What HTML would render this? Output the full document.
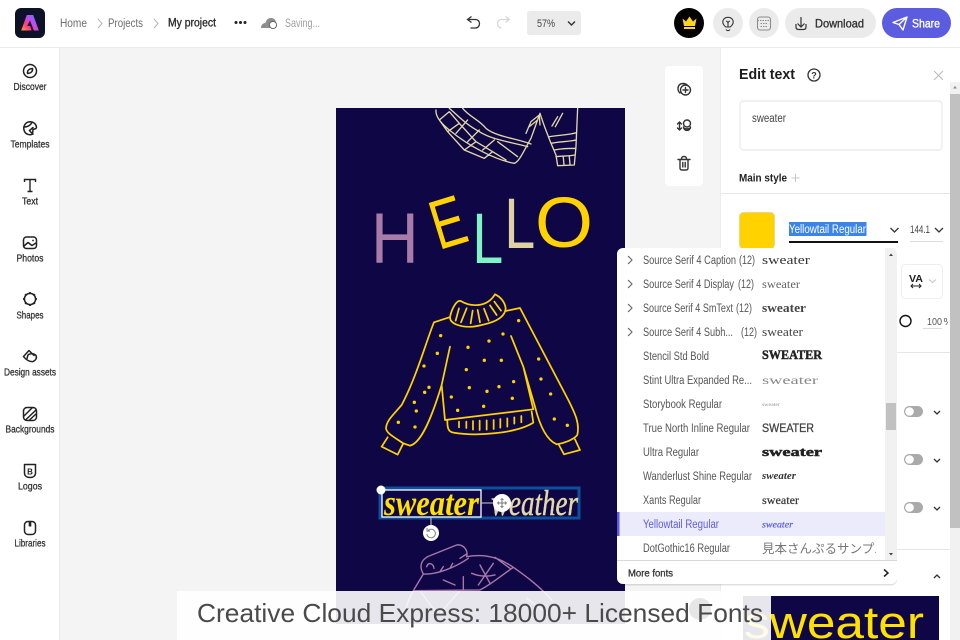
<!DOCTYPE html>
<html lang="en"><head><meta charset="utf-8"><title>Creative Cloud Express</title>
<style>
html,body{margin:0;padding:0;width:960px;height:640px;overflow:hidden;background:#f4f4f4}
svg{display:block;position:absolute;left:0;top:0}
text{font-family:"Liberation Sans","Noto Sans CJK JP",sans-serif}
.n{font-size:11.5px;fill:#555}
.k{font-size:10.5px;fill:#333;stroke:#333;stroke-width:.3;text-anchor:middle}
.i{fill:none;stroke:#222;stroke-width:1.5;stroke-linecap:round;stroke-linejoin:round}
.c{fill:none;stroke:#333;stroke-width:1.4;stroke-linecap:round;stroke-linejoin:round}
.sw{fill:none;stroke:#ffd200;stroke-width:5.2;stroke-linecap:round;stroke-linejoin:round}
.cr{fill:none;stroke:#e3d8a6;stroke-width:4;stroke-linecap:round;stroke-linejoin:round}
.pu{fill:none;stroke:#a877a9;stroke-width:4.2;stroke-linecap:round;stroke-linejoin:round}
</style></head><body>
<svg width="960" height="640" viewBox="0 0 960 640" xmlns="http://www.w3.org/2000/svg">
<defs>
<linearGradient id="lg" x1="0" y1="1" x2="1" y2="0.2"><stop offset="0" stop-color="#ffa02a"/><stop offset=".35" stop-color="#ff3d7f"/><stop offset=".65" stop-color="#c04af5"/><stop offset="1" stop-color="#3f8bf7"/></linearGradient>
<clipPath id="art"><rect x="336" y="108" width="289" height="516"/></clipPath>
<clipPath id="dot"><rect x="762" y="538" width="114" height="22"/></clipPath>
<clipPath id="pct"><rect x="920" y="310" width="28" height="20"/></clipPath>
</defs>
<rect width="960" height="640" fill="#f4f4f4"/>

<!-- artboard -->
<rect x="336" y="108" width="289" height="516" fill="#0f0745"/>
<g clip-path="url(#art)">
  <g transform="translate(336,100) scale(.3333)">
    <path class="cr" d="M300 30C298 50 315 70 340 90C400 140 480 180 535 190C550 185 565 150 585 115L612 40M340 25C370 50 385 70 430 95C470 120 520 125 575 140M380 25C400 50 430 60 450 85C480 110 540 115 585 132M612 40C625 80 640 120 660 165L665 197L715 195L720 140L725 25M640 110C670 105 700 105 722 98M645 130C670 125 700 125 720 120M655 150C680 145 700 145 720 145M660 170C680 168 700 168 718 165M682 172L684 195M700 170L702 193M648 78L665 50M658 80L680 40M570 100L585 65L610 45L612 75M580 80L605 60M310 60L340 35L370 70L335 95ZM370 70L420 125L385 150L335 95M420 125L470 155L445 175L385 150M470 155L510 180M485 125L545 170M360 100L395 60M395 125L430 90M440 150L475 120"/>
  </g>
  <g fill="#ffd200">
    <text transform="translate(371,263) scale(.93,1)" x="0" y="0" font-size="71" fill="#a97ba8">H</text>
    <text transform="translate(443,249) rotate(-17) scale(.72,1)" x="-6" y="0" font-size="70">E</text>
    <text transform="translate(477,263) scale(.78,1)" x="-6" y="0" font-size="71" fill="#7ff5c5">L</text>
    <text transform="translate(509,248) scale(.78,1)" x="-6" y="0" font-size="71" fill="#ddd2a0">L</text>
    <text transform="translate(535,247) scale(1.05,1)" x="0" y="0" font-size="71">O</text>
  </g>
  <g transform="translate(360,280) scale(.3333)">
    <path class="sw" d="M270 112C275 85 290 60 302 63C330 80 380 85 405 43C420 50 435 65 437 85C435 115 400 130 340 140C300 143 270 130 270 112Z"/>
    <path class="sw" d="M287 122L297 85M303 127L320 85M332 130L338 92M360 127L353 90M386 122L372 86M410 105L390 76M423 92L403 65"/>
    <path class="sw" d="M268 112L222 127C200 180 170 290 125 375C100 405 80 420 78 445C80 460 100 470 130 490L150 497C180 490 210 430 245 315L270 200"/>
    <path class="sw" d="M437 93L480 84L625 360C645 400 660 430 652 465C640 480 610 490 590 493C560 480 540 440 525 380L490 260L453 168M490 260L520 388L255 420L245 315"/>
    <path class="sw" d="M262 422C262 445 265 455 280 458C350 470 470 460 520 428L515 395"/>
    <path class="sw" d="M83 472L65 500L113 524L130 490M597 495L612 523L660 510L645 478"/>
    <path class="sw" d="M297 425V442M319 425V444M339 423V449M359 422V450M380 421V449M401 420V447M421 417V443M442 415V440M463 412V431M484 408V427"/>
    <g fill="#ffd200"><circle cx="476" cy="122" r="5"/><circle cx="242" cy="167" r="5"/><circle cx="429" cy="162" r="5"/><circle cx="387" cy="183" r="5"/><circle cx="324" cy="202" r="5"/><circle cx="232" cy="220" r="5"/><circle cx="373" cy="241" r="5"/><circle cx="424" cy="241" r="5"/><circle cx="536" cy="237" r="5"/><circle cx="192" cy="258" r="5"/><circle cx="319" cy="269" r="5"/><circle cx="543" cy="297" r="5"/><circle cx="461" cy="305" r="5"/><circle cx="417" cy="320" r="5"/><circle cx="328" cy="323" r="5"/><circle cx="207" cy="322" r="5"/><circle cx="194" cy="337" r="5"/><circle cx="381" cy="334" r="5"/><circle cx="572" cy="342" r="5"/><circle cx="274" cy="351" r="5"/><circle cx="457" cy="355" r="5"/><circle cx="163" cy="367" r="5"/><circle cx="371" cy="379" r="5"/><circle cx="169" cy="393" r="5"/><circle cx="293" cy="391" r="5"/><circle cx="583" cy="417" r="5"/><circle cx="115" cy="427" r="5"/><circle cx="622" cy="436" r="5"/><circle cx="165" cy="441" r="5"/></g>
  </g>
  <!-- selected text -->
  <rect x="380" y="488" width="199" height="30" fill="none" stroke="#0d4f9c" stroke-width="3"/>
  <text x="384" y="515" font-size="36" font-style="italic" font-weight="bold" fill="#ffe100" textLength="95" lengthAdjust="spacingAndGlyphs" style="font-family:'Liberation Serif',serif">sweater</text>
  <text x="491" y="515" font-size="36" font-style="italic" fill="#e3d8a6" stroke="#e3d8a6" stroke-width=".5" textLength="87" lengthAdjust="spacingAndGlyphs" style="font-family:'Liberation Serif',serif">weather</text>
  <rect x="382" y="490" width="99" height="27" fill="none" stroke="#fff" stroke-width="1.3"/>
  <path d="M481 503H494M431 517V526" stroke="#cfcfd8" stroke-width="1"/>
  <circle cx="381" cy="490" r="4.5" fill="#fff"/>
  <circle cx="502" cy="503" r="9" fill="#fff"/>
  <path d="M502 499V507M498 503H506" stroke="#777" stroke-width="1"/>
  <path d="M500.500 500L502 498.500L503.500 500M500.500 506L502 507.500L503.500 506M499 501.500L497.500 503L499 504.500M505 501.500L506.500 503L505 504.500" fill="none" stroke="#777" stroke-width=".8"/>
  <circle cx="431" cy="533" r="8" fill="#fff"/>
  <path d="M428 530.500A4.300 4.300 0 1 1 426.800 534M427 528V531H430" fill="none" stroke="#777" stroke-width=".9"/>
  <!-- bottom sweater -->
  <g transform="translate(360,470) scale(.3333)">
    <path class="pu" d="M190 312C175 285 185 265 215 255L290 225C310 222 325 240 320 260C350 255 400 250 460 292C420 320 390 345 360 360L160 362ZM190 312C230 315 290 290 325 265M200 290C205 275 220 280 222 295M300 265L320 252M240 305L250 290M270 295L278 280M335 310C360 320 385 320 405 315M360 285L390 340M400 280L355 345M405 262L450 295M460 292C500 320 540 350 575 390M160 362C150 380 140 400 130 440M250 330L285 345M310 320V360M180 362L230 430M300 362L240 430M500 385L560 430"/>
  </g>
</g>

<!-- top bar -->
<rect width="960" height="47" fill="#fff"/>
<rect y="47" width="960" height="1" fill="#ececec"/>
<rect x="15" y="8" width="30" height="30" rx="6" fill="#0d1226"/>
<path d="M26.800 15H33.200L38.800 30.500H33.800L30 20.500L27.200 26H30.200L31.500 30.500H21.200Z" fill="url(#lg)"/>
<text x="60" y="27" font-size="11.500" fill="#6e6e6e" textLength="27" lengthAdjust="spacingAndGlyphs">Home</text>
<path d="M98 19L102 23.500L98 28M154 19L158 23.500L154 28" fill="none" stroke="#b5b5b5" stroke-width="1"/>
<text x="108" y="27" font-size="11.500" fill="#6e6e6e" textLength="35" lengthAdjust="spacingAndGlyphs">Projects</text>
<text x="168" y="26.500" font-size="11.500" fill="#2c2c2c" stroke="#2c2c2c" stroke-width=".35" textLength="48" lengthAdjust="spacingAndGlyphs">My project</text>
<g fill="#222"><circle cx="236" cy="22.500" r="1.500"/><circle cx="240.500" cy="22.500" r="1.500"/><circle cx="245" cy="22.500" r="1.500"/></g>
<path d="M261 28C261 24 264 23 265.500 23C266 20 268 18 271 18C274 18 276 20 276 23L273 28Z" fill="#8d8d8d"/>
<circle cx="273" cy="25" r="3.600" fill="#fff" stroke="#666" stroke-width="1"/>
<text x="285" y="27" font-size="11.500" fill="#a0a0a0" textLength="35" lengthAdjust="spacingAndGlyphs">Saving...</text>

<path d="M468 19.500H475.500C478 19.500 479.500 21.500 479.500 23.500C479.500 26 478 28 475.500 28H470.500M471.500 16.500L467.500 19.500L471.500 22.500" fill="none" stroke="#333" stroke-width="1.300"/>
<path d="M509 19.500H501.500C499 19.500 497.500 21.500 497.500 23.500C497.500 26 499 28 501.500 28M505.500 16.500L509.500 19.500L505.500 22.500" fill="none" stroke="#d8d8d8" stroke-width="1.300"/>
<rect x="527" y="11" width="54" height="24" rx="3" fill="#ebebeb"/>
<text x="537" y="27" font-size="11" fill="#444" textLength="18" lengthAdjust="spacingAndGlyphs">57%</text>
<path d="M568 21.500L571.500 25L575 21.500" fill="none" stroke="#333" stroke-width="1.400"/>

<circle cx="689" cy="23" r="15" fill="#000"/>
<path d="M682.500 18.500L686 21.500L689.500 16.500L693 21.500L696.500 18.500L695 26H684Z" fill="#ffd51e"/><rect x="684" y="27" width="11" height="2" fill="#ffd51e"/>
<circle cx="728" cy="23" r="15" fill="#ebebeb"/>
<path d="M725.800 27C724 25.500 722.800 24 722.800 22C722.800 19.200 725 17.300 728 17.300C731 17.300 733.200 19.200 733.200 22C733.200 24 732 25.500 730.200 27ZM726 29.500C727 31 729 31 730 29.500M728 26.500V22.500L726.300 20.800M728 22.500L729.700 20.800" fill="none" stroke="#333" stroke-width="1.100"/>
<circle cx="764" cy="23" r="15" fill="#ebebeb"/>
<rect x="757.500" y="17" width="13" height="13" rx="2.500" fill="none" stroke="#8d8d8d" stroke-width="1.100"/>
<path d="M757.500 20.500H770.500M760.500 23.500H767.500M760.500 26.500H767.500" stroke="#8d8d8d" stroke-width="1.100" stroke-dasharray="1.500 1"/>
<rect x="785" y="8" width="91" height="30" rx="15" fill="#ebebeb"/>
<path d="M801 17V26.500M797.500 23.500L801 27L804.500 23.500M796 24V27C796 28.500 797 29.500 798.500 29.500H803.500C805 29.500 806 28.500 806 27V24" fill="none" stroke="#333" stroke-width="1.200"/>
<text x="815" y="27.500" font-size="12" fill="#333" stroke="#333" stroke-width=".35" textLength="49" lengthAdjust="spacingAndGlyphs">Download</text>
<rect x="882" y="8" width="69" height="30" rx="15" fill="#5c5ce0"/>
<path d="M893 22.500L907 17L903 30L899 24.500ZM899 24.500L907 17" fill="none" stroke="#fff" stroke-width="1.400" stroke-linejoin="round"/>
<text x="912" y="27.500" font-size="12" fill="#fff" stroke="#fff" stroke-width=".35" textLength="28" lengthAdjust="spacingAndGlyphs">Share</text>

<!-- left sidebar -->
<rect y="48" width="59" height="592" fill="#fff"/>
<rect x="59" y="48" width="1" height="592" fill="#ececec"/>
<circle class="i" cx="30" cy="71" r="6.500"/><path class="i" d="M27.500 73.500C27 70.500 29 68.800 32.500 68.500C33 71.500 31 73.200 27.500 73.500Z"/>
<text class="k" x="30" y="90" textLength="33" lengthAdjust="spacingAndGlyphs">Discover</text>
<path class="i" d="M33 134C30 135.500 26 134.500 24.500 131.500C22.500 127 25 122 30 121.800C34 121.800 36.500 124.500 36.500 127.500"/><path class="i" d="M24 127C27 127 30 126 32 122.500M36 128.500L33 129.500L32.500 134L29.500 130.500L33 127.500"/>
<text class="k" x="30" y="147.500" textLength="39" lengthAdjust="spacingAndGlyphs">Templates</text>
<path d="M24.500 182V179.500H35.500V182M30 179.500V191.500M27.500 191.500H32.500" fill="none" stroke="#222" stroke-width="1.400"/>
<text class="k" x="30" y="204.500" textLength="16" lengthAdjust="spacingAndGlyphs">Text</text>
<rect class="i" x="23.500" y="237" width="13" height="11.500" rx="3"/><path class="i" d="M24 246L28 242.500L32 245.500L36 243"/><circle cx="33" cy="240.500" r=".9" fill="#222"/>
<text class="k" x="30" y="261.500" textLength="27" lengthAdjust="spacingAndGlyphs">Photos</text>
<circle class="i" cx="30" cy="299" r="5.600"/><g fill="#222"><circle cx="30" cy="293" r="1.100"/><circle cx="30" cy="305" r="1.100"/><circle cx="24" cy="299" r="1.100"/><circle cx="36" cy="299" r="1.100"/><circle cx="25.800" cy="294.800" r="1.100"/><circle cx="34.200" cy="294.800" r="1.100"/><circle cx="25.800" cy="303.200" r="1.100"/><circle cx="34.200" cy="303.200" r="1.100"/></g>
<text class="k" x="30" y="318.500" textLength="27" lengthAdjust="spacingAndGlyphs">Shapes</text>
<path class="i" d="M23.500 356.500L29 350.500L34 355.500"/><path class="i" d="M23.500 356.500C26 360 30 362 33 361.500C36 360.500 37 357.500 36 355.500C34.500 353.500 30 353 28 355L27 358.500"/>
<text class="k" x="30" y="375.500" textLength="52" lengthAdjust="spacingAndGlyphs">Design assets</text>
<rect class="i" x="23.500" y="407.500" width="13" height="13" rx="3.500"/><path class="i" d="M24 416L32 408M25.500 420L36 410M29.500 420L36 414"/>
<text class="k" x="30" y="432.500" textLength="49" lengthAdjust="spacingAndGlyphs">Backgrounds</text>
<path class="i" d="M24.500 464.500H35.500V473C35.500 476 33 477.500 30 477.500C27 477.500 24.500 476 24.500 473Z"/><text x="30" y="474.500" font-size="8" font-weight="bold" text-anchor="middle" fill="#222">B</text>
<text class="k" x="30" y="489.500" textLength="24" lengthAdjust="spacingAndGlyphs">Logos</text>
<rect class="i" x="24.500" y="521.500" width="11" height="13" rx="3.500"/><rect x="28.700" y="521" width="2.600" height="5.500" fill="#222"/>
<text class="k" x="30" y="546.500" textLength="31" lengthAdjust="spacingAndGlyphs">Libraries</text>

<!-- floating toolbar -->
<rect x="665" y="66" width="38" height="120" rx="4" fill="#fff"/>
<path class="c" d="M680 93C678.500 92 678 90.500 678 88.500C678 85.500 680 83.500 683 83.500C685 83.500 686.500 84 687.500 85.500"/><circle class="c" cx="685.500" cy="90" r="5"/><path class="c" d="M685.500 87.500V92.500M683 90H688" stroke-width="1.100"/>
<circle class="c" cx="687" cy="123.500" r="3.500"/><path class="c" d="M683.500 127C683.500 129.500 690.500 129.500 690.500 127C690.500 131.500 683.500 131.500 683.500 127Z"/><path class="c" d="M679.500 122V130M677.500 124L679.500 122L681.500 124M677.500 128L679.500 130L681.500 128"/>
<path class="c" d="M678 159.500H690M680 159.500V168C680 169.200 680.800 170 682 170H686C687.200 170 688 169.200 688 168V159.500M681.500 159.500C681.500 157 682.500 156.500 684 156.500C685.500 156.500 686.500 157 686.500 159.500M682.800 162.500V167M685.200 162.500V167"/>

<!-- right panel -->
<rect x="721" y="48" width="239" height="592" fill="#fff"/>
<rect x="720" y="48" width="1" height="592" fill="#ececec"/>
<rect x="950" y="82" width="10" height="558" fill="#f1f1f1"/>
<rect x="950" y="94" width="10" height="434" fill="#c1c1c1"/>
<path d="M953 88.500L955 86L957 88.500Z" fill="#8a8a8a"/>
<text x="739" y="79" font-size="14.500" font-weight="bold" fill="#1c1c1c" textLength="56" lengthAdjust="spacingAndGlyphs">Edit text</text>
<circle cx="814" cy="75" r="6" fill="none" stroke="#333" stroke-width="1.300"/>
<text x="814" y="78.500" font-size="9" font-weight="bold" text-anchor="middle" fill="#333">?</text>
<path d="M934 71L943 80M943 71L934 80" stroke="#bcbcbc" stroke-width="1.100"/>
<rect x="740" y="101" width="202" height="49" rx="3.500" fill="#fff" stroke="#ececec" stroke-width="1.400"/>
<text x="752" y="122" font-size="11.500" fill="#444" textLength="34" lengthAdjust="spacingAndGlyphs">sweater</text>
<text x="739" y="181.500" font-size="11" font-weight="bold" fill="#222" textLength="48" lengthAdjust="spacingAndGlyphs">Main style</text>
<path d="M795.500 174V182M791.500 178H799.500" stroke="#c5c5c5" stroke-width="1"/>
<rect x="721" y="193" width="229" height="1" fill="#e6e6e6"/>
<rect x="739.500" y="212.500" width="35" height="36" rx="4" fill="#ffd200" stroke="#e7d590"/>
<rect x="789" y="222" width="77.500" height="14" fill="#3b85e8"/>
<text x="789" y="233" font-size="11.500" fill="#fff" textLength="77" lengthAdjust="spacingAndGlyphs">Yellowtail Regular</text>
<path d="M890.500 228L894.500 232L898.500 228M935 228L939 232L943 228" fill="none" stroke="#333" stroke-width="1.300"/>
<rect x="789" y="241" width="109" height="2" fill="#111"/>
<text x="910" y="233" font-size="11" fill="#444" textLength="20" lengthAdjust="spacingAndGlyphs">144.1</text>
<rect x="910" y="241" width="33" height="1" fill="#dcdcdc"/>
<rect x="901.500" y="264.500" width="41" height="34" rx="4" fill="#fff" stroke="#eee"/>
<text x="909" y="282" font-size="10" font-weight="bold" fill="#222" textLength="14" lengthAdjust="spacingAndGlyphs">VA</text>
<path d="M911 286H921M913 284L911 286L913 288M919 284L921 286L919 288" fill="none" stroke="#222" stroke-width="1"/>
<path d="M929 279.500L932.500 282.500L936 279.500" fill="none" stroke="#c5c5c5" stroke-width="1.100"/>
<circle cx="905.500" cy="321" r="5.500" fill="none" stroke="#111" stroke-width="1.400"/>
<g clip-path="url(#pct)">
<text x="927" y="325" font-size="10.500" fill="#555" textLength="15" lengthAdjust="spacingAndGlyphs">100</text>
<text x="943.500" y="325" font-size="10.500" fill="#555">%</text>
</g>
<rect x="923" y="328" width="19" height="1" fill="#dcdcdc"/>
<rect x="721" y="352" width="229" height="1" fill="#e6e6e6"/>
<g>
<rect x="904" y="406" width="19" height="11" rx="5.500" fill="#aaa"/><circle cx="909.500" cy="411.500" r="4.300" fill="#fff"/>
<rect x="904" y="454" width="19" height="11" rx="5.500" fill="#aaa"/><circle cx="909.500" cy="459.500" r="4.300" fill="#fff"/>
<rect x="904" y="502" width="19" height="11" rx="5.500" fill="#aaa"/><circle cx="909.500" cy="507.500" r="4.300" fill="#fff"/>
</g>
<path d="M934 411L937 414L940 411M934 459L937 462L940 459M934 507L937 510L940 507M934 578L937 575L940 578" fill="none" stroke="#333" stroke-width="1.300"/>
<rect x="721" y="549" width="229" height="1" fill="#e6e6e6"/>

<!-- thumbnail + banner -->
<rect x="743" y="596" width="196" height="44" fill="#0f0745"/>
<text x="744" y="638" font-size="45" fill="#ffe100" textLength="180" lengthAdjust="spacingAndGlyphs">sweater</text>
<circle cx="700" cy="609" r="11" fill="#000"/>
<rect x="177" y="591" width="594" height="49" fill="#fff" fill-opacity=".9"/>
<text x="197" y="622" font-size="26" fill="#4a4a4a" textLength="566" lengthAdjust="spacingAndGlyphs">Creative Cloud Express: 18000+ Licensed Fonts</text>

<!-- font dropdown -->
<rect x="617" y="248" width="280" height="336" rx="6" fill="#000" fill-opacity=".12" transform="translate(0,1.500)"/>
<rect x="617" y="248" width="280" height="336" rx="6" fill="#fff"/>
<path d="M885 248H891A6 6 0 0 1 897 254V560H885Z" fill="#f1f1f1"/>
<rect x="886" y="403" width="10" height="27" fill="#c1c1c1"/>
<path d="M889 256L891 253.500L893 256ZM889 553L891 555.500L893 553Z" fill="#444"/>
<path d="M628 256L632 260L628 264M628 280L632 284L628 288M628 304L632 308L628 312M628 328L632 332L628 336" fill="none" stroke="#666" stroke-width="1.100"/>

<text class="n" x="643" y="264" textLength="93" lengthAdjust="spacingAndGlyphs">Source Serif 4 Caption</text><text class="n" x="739" y="264" textLength="16" lengthAdjust="spacingAndGlyphs">(12)</text>
<text class="n" x="643" y="288" textLength="91" lengthAdjust="spacingAndGlyphs">Source Serif 4 Display</text><text class="n" x="738" y="288" textLength="16" lengthAdjust="spacingAndGlyphs">(12)</text>
<text class="n" x="643" y="312" textLength="90" lengthAdjust="spacingAndGlyphs">Source Serif 4 SmText</text><text class="n" x="736" y="312" textLength="16" lengthAdjust="spacingAndGlyphs">(12)</text>
<text class="n" x="643" y="336" textLength="90" lengthAdjust="spacingAndGlyphs">Source Serif 4 Subh...</text><text class="n" x="741" y="336" textLength="16" lengthAdjust="spacingAndGlyphs">(12)</text>
<text class="n" x="643" y="360" textLength="66" lengthAdjust="spacingAndGlyphs">Stencil Std Bold</text>
<text class="n" x="643" y="384" textLength="109" lengthAdjust="spacingAndGlyphs">Stint Ultra Expanded Re...</text>
<text class="n" x="643" y="408" textLength="79" lengthAdjust="spacingAndGlyphs">Storybook Regular</text>
<text class="n" x="643" y="432" textLength="107" lengthAdjust="spacingAndGlyphs">True North Inline Regular</text>
<text class="n" x="643" y="456" textLength="56" lengthAdjust="spacingAndGlyphs">Ultra Regular</text>
<text class="n" x="643" y="480" textLength="109" lengthAdjust="spacingAndGlyphs">Wanderlust Shine Regular</text>
<text class="n" x="643" y="504" textLength="58" lengthAdjust="spacingAndGlyphs">Xants Regular</text>
<rect x="617" y="512" width="268" height="24" fill="#ecebfb"/><rect x="617" y="512" width="2.500" height="24" fill="#5c5ce0"/>
<text class="n" x="643" y="528" textLength="76" lengthAdjust="spacingAndGlyphs" style="fill:#5c5ce0">Yellowtail Regular</text>
<text class="n" x="643" y="552" textLength="87" lengthAdjust="spacingAndGlyphs">DotGothic16 Regular</text>

<g>
<text x="762" y="264" font-size="13" fill="#333" textLength="48" lengthAdjust="spacingAndGlyphs" style="font-family:'Liberation Serif',serif">sweater</text>
<text x="762" y="288" font-size="12" fill="#666" textLength="38" lengthAdjust="spacingAndGlyphs" style="font-family:'Liberation Serif',serif">sweater</text>
<text x="762" y="312" font-size="12.500" font-weight="bold" fill="#444" textLength="44" lengthAdjust="spacingAndGlyphs" style="font-family:'Liberation Serif',serif">sweater</text>
<text x="762" y="336" font-size="12.500" fill="#444" textLength="41" lengthAdjust="spacingAndGlyphs" style="font-family:'Liberation Serif',serif">sweater</text>
<text x="762" y="359" font-size="12.500" font-weight="bold" fill="#222" stroke="#222" stroke-width=".4" textLength="60" lengthAdjust="spacingAndGlyphs" style="font-family:'Liberation Serif',serif">SWEATER</text>
<text x="762" y="384" font-size="12" fill="#888" textLength="56" lengthAdjust="spacingAndGlyphs" style="font-family:'Liberation Serif',serif">sweater</text>
<text x="762" y="406" font-size="5" fill="#999" textLength="18" lengthAdjust="spacingAndGlyphs" style="font-family:'Liberation Serif',serif">sweater</text>
<text x="762" y="432" font-size="12" fill="#444" stroke="#444" stroke-width=".3" textLength="52" lengthAdjust="spacingAndGlyphs">SWEATER</text>
<text x="762" y="456" font-size="13" font-weight="bold" fill="#222" stroke="#222" stroke-width=".5" textLength="60" lengthAdjust="spacingAndGlyphs" style="font-family:'Liberation Serif',serif">sweater</text>
<text x="762" y="479" font-size="10.500" font-style="italic" font-weight="bold" fill="#333" textLength="34" lengthAdjust="spacingAndGlyphs" style="font-family:'Liberation Serif',serif">sweater</text>
<text x="762" y="504" font-size="12" fill="#333" stroke="#333" stroke-width=".2" textLength="37" lengthAdjust="spacingAndGlyphs" style="font-family:'Liberation Serif',serif">sweater</text>
<text x="762" y="527.500" font-size="9.500" font-style="italic" fill="#5c5ce0" stroke="#5c5ce0" stroke-width=".2" textLength="31" lengthAdjust="spacingAndGlyphs" style="font-family:'Liberation Serif',serif">sweater</text>
</g>
<g clip-path="url(#dot)"><text x="762" y="553" font-size="12.500" fill="#777">見本さんぷるサンプル</text></g>

<rect x="617" y="560" width="280" height="1" fill="#d8d8d8"/>
<text x="628" y="576.500" font-size="10.500" fill="#333" stroke="#333" stroke-width=".3" textLength="45" lengthAdjust="spacingAndGlyphs">More fonts</text>
<path d="M884 569.500L888 573L884 576.500" fill="none" stroke="#222" stroke-width="1.500"/>
</svg>
</body></html>
